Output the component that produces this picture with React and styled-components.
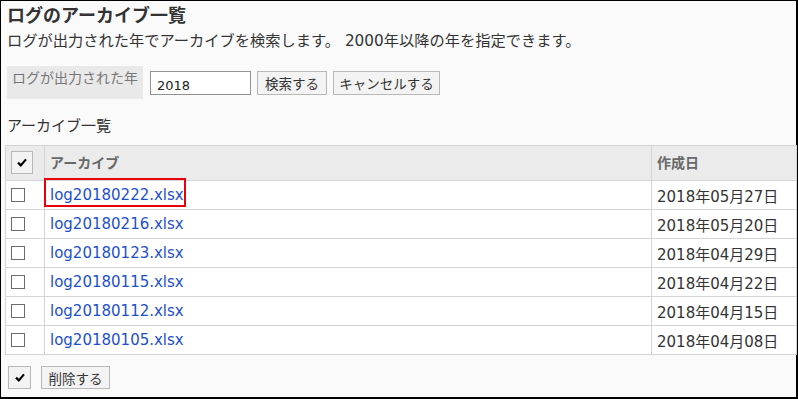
import React from "react";
import styled, { createGlobalStyle } from "styled-components";

const Global = createGlobalStyle`
  html, body { margin: 0; padding: 0; background: #fff; }
  body { font-family: "DejaVu Sans", "Noto Sans CJK JP", sans-serif; color: #333; }
  * { box-sizing: border-box; }
`;

const Frame = styled.div`
  width: 798px;
  height: 399px;
  border: 1px solid #000;
  border-right-width: 2px;
  border-bottom-width: 2px;
  background: #fafafa;
  padding: 4px 0 0 4px;
  display: flex;
  flex-direction: column;
`;

const Title = styled.h1`
  margin: 0 0 0 2px;
  font-size: 18px;
  line-height: 22px;
  font-weight: bold;
  color: #333;
`;

const Desc = styled.p`
  margin: 4px 0 0 2px;
  font-size: 15.25px;
  line-height: 20px;
  color: #333;
`;

const SearchRow = styled.div`
  margin: 15px 0 0 2px;
  display: flex;
  align-items: flex-start;
`;

const FieldLabel = styled.div`
  background: #e9e9e9;
  color: #777;
  font-size: 14px;
  line-height: 18px;
  padding: 3px 5px 12px 5px;
  width: 136px;
  white-space: nowrap;
`;

const TextInput = styled.input`
  margin: 5px 0 0 7px;
  width: 101px;
  height: 24px;
  border: 1px solid #939393;
  background: #fff;
  font-family: "DejaVu Sans", sans-serif;
  font-size: 13px;
  color: #222;
  padding: 4px 0 0 6px;
  outline: none;
`;

const Button = styled.button`
  margin: ${(p) => p.$mt || 0}px 0 0 ${(p) => p.$ml || 0}px;
  height: ${(p) => p.$h || 24}px;
  padding: 0 ${(p) => (p.$icon ? 0 : 8)}px;
  width: ${(p) => (p.$w ? `${p.$w}px` : "auto")};
  border: 1px solid #b8b8b8;
  background: #f3f3f3;
  font-family: "DejaVu Sans", "Noto Sans CJK JP", sans-serif;
  font-size: 13.5px;
  color: #333;
  display: inline-flex;
  align-items: center;
  justify-content: center;
  white-space: nowrap;
  cursor: pointer;
`;

const SectionTitle = styled.div`
  margin: 17px 0 0 2px;
  font-size: 15px;
  line-height: 20px;
  color: #333;
`;

const Table = styled.table`
  margin-top: 9px;
  width: 792px;
  border-collapse: collapse;
  table-layout: fixed;
  border: 1px solid #d4d4d4;
`;

const HeadCell = styled.th`
  background: #ebebeb;
  border: 1px solid #d4d4d4;
  height: 35px;
  padding: 0 5px 2px 5px;
  text-align: left;
  font-weight: bold;
  font-size: 14px;
  color: #686868;
  vertical-align: middle;
`;

const Cell = styled.td`
  position: relative;
  background: #fff;
  border: 1px solid #d4d4d4;
  height: 29px;
  padding: 0 5px;
  font-size: 15px;
  color: #333;
  vertical-align: middle;
  white-space: nowrap;
`;

const BoxCell = styled(Cell)`
  padding: 0;
`;

const Box = styled.span`
  display: block;
  margin-left: 5px;
  width: 14px;
  height: 14px;
  border: 1px solid #6b6b6b;
  background: #fff;
`;

const FileLink = styled.a`
  color: #1d4fcb;
  text-decoration: none;
  font-size: 15px;
`;

const Highlight = styled.div`
  position: absolute;
  left: -1px;
  top: -3px;
  width: 142px;
  height: 29px;
  border: 2px solid #e8000b;
  pointer-events: none;
`;

const Footer = styled.div`
  margin: 11px 0 0 3px;
  display: flex;
  align-items: center;
`;

const Check = () => (
  <svg width="10" height="9" viewBox="0 0 10 9">
    <path d="M1 4.6 L3.8 7.4 L9 1.4" fill="none" stroke="#000" strokeWidth="2.2" />
  </svg>
);

const rows = [
  ["log20180222.xlsx", "2018年05月27日"],
  ["log20180216.xlsx", "2018年05月20日"],
  ["log20180123.xlsx", "2018年04月29日"],
  ["log20180115.xlsx", "2018年04月22日"],
  ["log20180112.xlsx", "2018年04月15日"],
  ["log20180105.xlsx", "2018年04月08日"],
];

export default function App() {
  return (
    <>
      <Global />
      <Frame>
        <Title>ログのアーカイブ一覧</Title>
        <Desc>ログが出力された年でアーカイブを検索します。 2000年以降の年を指定できます。</Desc>
        <SearchRow>
          <FieldLabel>ログが出力された年</FieldLabel>
          <TextInput defaultValue="2018" />
          <Button $mt={5} $ml={6} $w={70}>検索する</Button>
          <Button $mt={5} $ml={6} $w={107}>キャンセルする</Button>
        </SearchRow>
        <SectionTitle>アーカイブ一覧</SectionTitle>
        <Table>
          <colgroup>
            <col style={{ width: 39 }} />
            <col />
            <col style={{ width: 145 }} />
          </colgroup>
          <thead>
            <tr>
              <HeadCell>
                <Button $icon $w={22} $h={23}>
                  <Check />
                </Button>
              </HeadCell>
              <HeadCell>アーカイブ</HeadCell>
              <HeadCell>作成日</HeadCell>
            </tr>
          </thead>
          <tbody>
            {rows.map(([name, date], i) => (
              <tr key={name}>
                <BoxCell>
                  <Box />
                </BoxCell>
                <Cell>
                  <FileLink href="#">{name}</FileLink>
                  {i === 0 && <Highlight />}
                </Cell>
                <Cell>{date}</Cell>
              </tr>
            ))}
          </tbody>
        </Table>
        <Footer>
          <Button $icon $w={23} $h={23}>
            <Check />
          </Button>
          <Button $ml={10} $w={69} $h={23}>削除する</Button>
        </Footer>
      </Frame>
    </>
  );
}
